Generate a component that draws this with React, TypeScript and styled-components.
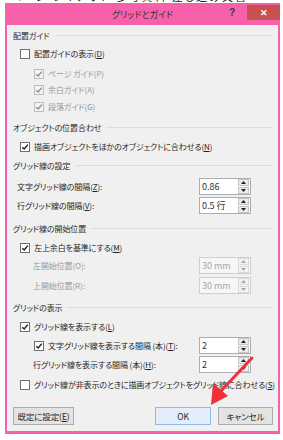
import React from "react";
import styled, { createGlobalStyle } from "styled-components";

const GlobalStyle = createGlobalStyle`
    html, body {
        margin: 0;
        padding: 0;
        background: #ffffff;
    }
    body {
        font-family: "Noto Sans CJK JP", "Noto Sans", sans-serif;
        font-feature-settings: "palt";
        color: #1f1f1f;
    }
`;

const Page = styled.div`
    position: relative;
    width: 283px;
    height: 440px;
    overflow: hidden;
    background: #ffffff;
`;

const TopStrip = styled.div`
    height: 3px;
    overflow: hidden;
    padding-left: 10px;
    font-size: 11px;
    line-height: 11px;
    color: #111;

    & span {
        display: block;
        margin-top: -9px;
        letter-spacing: 2px;
    }
`;

const Window = styled.div`
    margin: 0 3px 0 5px;
    background: #f661aa;
    padding: 0 2px 3px 2px;
`;

const TitleBar = styled.div`
    position: relative;
    height: 22px;
    display: flex;
    align-items: center;
    justify-content: center;
    font-size: 9px;
    color: #333;
`;

const TitleButtons = styled.div`
    position: absolute;
    right: -2px;
    top: 2px;
    display: flex;
    align-items: center;
`;

const HelpButton = styled.div`
    width: 20px;
    height: 15px;
    font-family: "Liberation Sans", sans-serif;
    font-weight: bold;
    font-size: 10px;
    color: #3a3a3a;
    display: flex;
    align-items: center;
    justify-content: center;
    margin-right: 5px;
`;

const CloseButton = styled.div`
    width: 33px;
    height: 15px;
    background: #c75050;
    color: #ffffff;
    font-family: "Liberation Sans", sans-serif;
    font-weight: bold;
    font-size: 9px;
    display: flex;
    align-items: center;
    justify-content: center;
`;

const Content = styled.div`
    background: #f0f0f0;
    height: 406px;
    padding: 1px 5px 0 6px;
    box-sizing: border-box;
    font-size: 8px;
    letter-spacing: -0.1px;
`;

const Header = styled.div<{ $mt?: number }>`
    display: flex;
    align-items: center;
    height: 17px;
    margin-top: ${(p) => p.$mt ?? 0}px;
    color: #2a2a2a;

    &::after {
        content: "";
        flex: 1;
        height: 1px;
        margin-left: 5px;
        background: #dcdcdc;
    }
`;

const Row = styled.div<{ $mt?: number; $indent?: number; $disabled?: boolean }>`
    display: flex;
    align-items: center;
    height: 17px;
    margin-top: ${(p) => p.$mt ?? 0}px;
    padding-left: ${(p) => p.$indent ?? 0}px;
    color: ${(p) => (p.$disabled ? "#9a9a9a" : "#1f1f1f")};
    white-space: nowrap;
`;

const Label = styled.span`
    flex: 1;
`;

const Box = styled.span<{ $disabled?: boolean }>`
    width: 8px;
    height: 8px;
    flex: none;
    border: 1px solid ${(p) => (p.$disabled ? "#bcbcbc" : "#6f6f6f")};
    background: ${(p) => (p.$disabled ? "#f4f4f4" : "#ffffff")};
    margin-right: 4px;
    display: flex;
    align-items: center;
    justify-content: center;
`;

const Spin = styled.div<{ $disabled?: boolean }>`
    width: 52px;
    height: 17px;
    box-sizing: border-box;
    margin-right: 22px;
    border: 1px solid ${(p) => (p.$disabled ? "#cfcfcf" : "#abadb3")};
    background: ${(p) => (p.$disabled ? "#f6f6f6" : "#ffffff")};
    color: ${(p) => (p.$disabled ? "#a8a8a8" : "#2b3340")};
    display: flex;
    align-items: center;
    font-size: 9px;
    letter-spacing: 0;
`;

const SpinValue = styled.span`
    flex: 1;
    padding-left: 2px;
`;

const SpinArrows = styled.div`
    width: 11px;
    height: 15px;
    display: flex;
    flex-direction: column;
    gap: 1px;
    margin-right: 1px;
`;

const SpinArrow = styled.div<{ $disabled?: boolean }>`
    flex: 1;
    border: 1px solid ${(p) => (p.$disabled ? "#dadada" : "#c4c4c4")};
    background: ${(p) => (p.$disabled ? "#f4f4f4" : "#ececec")};
    display: flex;
    align-items: center;
    justify-content: center;
`;

const ButtonRow = styled.div`
    display: flex;
    align-items: center;
    margin-top: 14px;
    gap: 7px;
`;

const Button = styled.div<{ $width: number; $primary?: boolean }>`
    width: ${(p) => p.$width}px;
    height: 18px;
    box-sizing: border-box;
    border: 1px solid ${(p) => (p.$primary ? "#8dbbe8" : "#acacac")};
    background: ${(p) => (p.$primary ? "#e3eefa" : "#e3e3e3")};
    display: flex;
    align-items: center;
    justify-content: center;
    font-size: 8.5px;
    color: #1f1f1f;
`;

const Spacer = styled.div`
    flex: 1;
`;

const ArrowOverlay = styled.svg`
    position: absolute;
    left: 0;
    top: 0;
    pointer-events: none;
`;

const Check = ({ on = false, disabled = false }: { on?: boolean; disabled?: boolean }) => (
    <Box $disabled={disabled}>
        {on && (
            <svg width="8" height="8" viewBox="0 0 8 8">
                <path
                    d="M1.3 4.2 L3.2 6 L6.8 1.6"
                    fill="none"
                    stroke={disabled ? "#8e8e8e" : "#222"}
                    strokeWidth="1.5"
                />
            </svg>
        )}
    </Box>
);

const Triangle = ({ up, disabled }: { up?: boolean; disabled?: boolean }) => (
    <svg width="5" height="3" viewBox="0 0 5 3">
        <path d={up ? "M0 3 L2.5 0 L5 3 Z" : "M0 0 L2.5 3 L5 0 Z"} fill={disabled ? "#a8a8a8" : "#222"} />
    </svg>
);

const SpinBox = ({ value, disabled = false }: { value: string; disabled?: boolean }) => (
    <Spin $disabled={disabled}>
        <SpinValue>{value}</SpinValue>
        <SpinArrows>
            <SpinArrow $disabled={disabled}>
                <Triangle up disabled={disabled} />
            </SpinArrow>
            <SpinArrow $disabled={disabled}>
                <Triangle disabled={disabled} />
            </SpinArrow>
        </SpinArrows>
    </Spin>
);

export default function App() {
    return (
        <Page>
            <GlobalStyle />
            <TopStrip>
                <span>ページ レイアウト 参考資料 差し込み文書</span>
            </TopStrip>
            <Window>
                <TitleBar>
                    グリッドとガイド
                    <TitleButtons>
                        <HelpButton>?</HelpButton>
                        <CloseButton>✕</CloseButton>
                    </TitleButtons>
                </TitleBar>
                <Content>
                    <Header $mt={1}>配置ガイド</Header>
                    <Row $mt={1} $indent={7}>
                        <Check />
                        <Label>
                            配置ガイドの表示(<u>D</u>)
                        </Label>
                    </Row>
                    <Row $mt={3} $indent={21} $disabled>
                        <Check on disabled />
                        <Label>ページ ガイド(P)</Label>
                    </Row>
                    <Row $mt={-1} $indent={21} $disabled>
                        <Check on disabled />
                        <Label>余白ガイド(A)</Label>
                    </Row>
                    <Row $indent={21} $disabled>
                        <Check on disabled />
                        <Label>段落ガイド(G)</Label>
                    </Row>

                    <Header $mt={4}>オブジェクトの位置合わせ</Header>
                    <Row $mt={2} $indent={7}>
                        <Check on />
                        <Label>
                            描画オブジェクトをほかのオブジェクトに合わせる(<u>N</u>)
                        </Label>
                    </Row>

                    <Header $mt={2}>グリッド線の設定</Header>
                    <Row $mt={4} $indent={4}>
                        <Label>
                            文字グリッド線の間隔(<u>Z</u>):
                        </Label>
                        <SpinBox value="0.86" />
                    </Row>
                    <Row $mt={2} $indent={4}>
                        <Label>
                            行グリッド線の間隔(<u>V</u>):
                        </Label>
                        <SpinBox value="0.5 行" />
                    </Row>

                    <Header $mt={6}>グリッド線の開始位置</Header>
                    <Row $mt={2} $indent={7}>
                        <Check on />
                        <Label>
                            左上余白を基準にする(<u>M</u>)
                        </Label>
                    </Row>
                    <Row $mt={1} $indent={20} $disabled>
                        <Label>左開始位置(O):</Label>
                        <SpinBox value="30 mm" disabled />
                    </Row>
                    <Row $mt={3} $indent={20} $disabled>
                        <Label>上開始位置(R):</Label>
                        <SpinBox value="30 mm" disabled />
                    </Row>

                    <Header $mt={5}>グリッドの表示</Header>
                    <Row $mt={2} $indent={7}>
                        <Check on />
                        <Label>
                            グリッド線を表示する(<u>L</u>)
                        </Label>
                    </Row>
                    <Row $mt={2} $indent={21}>
                        <Check on />
                        <Label>
                            文字グリッド線を表示する間隔 (本)(<u>T</u>):
                        </Label>
                        <SpinBox value="2" />
                    </Row>
                    <Row $mt={2} $indent={20}>
                        <Label>
                            行グリッド線を表示する間隔 (本)(<u>H</u>):
                        </Label>
                        <SpinBox value="2" />
                    </Row>
                    <Row $mt={3} $indent={7}>
                        <Check />
                        <Label>
                            グリッド線が非表示のときに描画オブジェクトをグリッド線に合わせる(<u>S</u>)
                        </Label>
                    </Row>

                    <ButtonRow>
                        <Button $width={61}>
                            既定に設定(<u>E</u>)
                        </Button>
                        <Spacer />
                        <Button $width={56} $primary>
                            OK
                        </Button>
                        <Button $width={55}>キャンセル</Button>
                    </ButtonRow>
                </Content>
            </Window>
            <ArrowOverlay width="283" height="440" viewBox="0 0 283 440">
                <line x1="252" y1="358" x2="221" y2="391" stroke="#f0303a" strokeWidth="3" strokeLinecap="round" />
                <path d="M211 405 L213 383 L228 396 Z" fill="#f0303a" />
            </ArrowOverlay>
        </Page>
    );
}
